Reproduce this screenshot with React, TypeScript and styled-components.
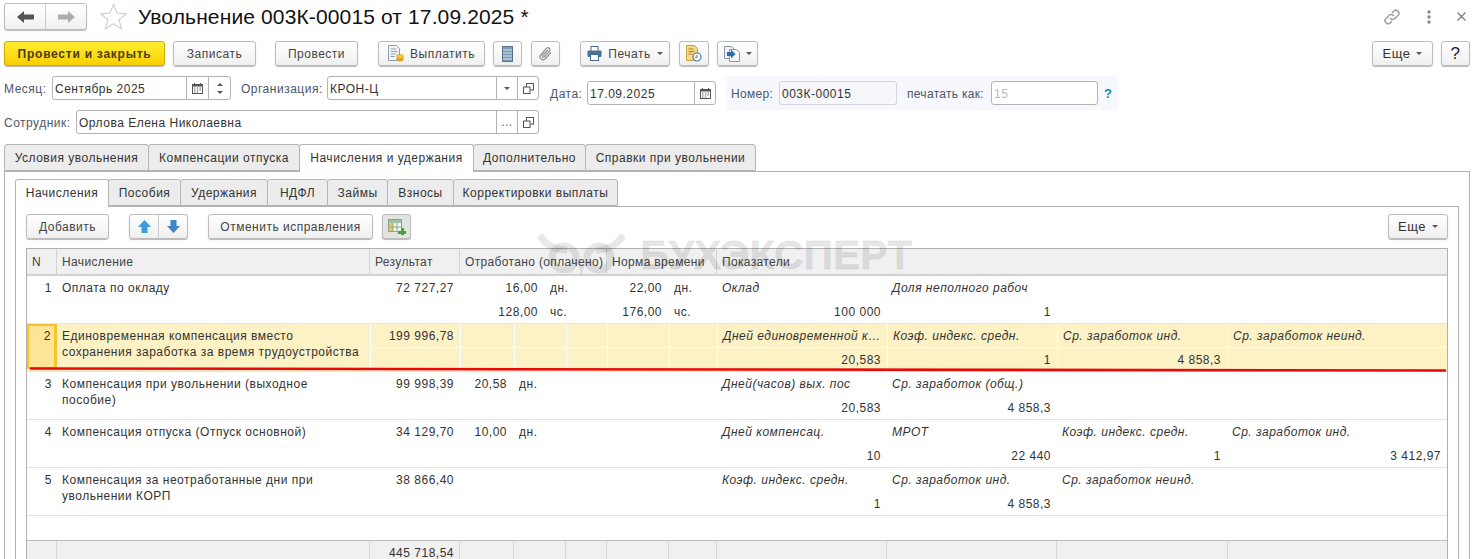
import styled, { createGlobalStyle } from "styled-components";
import { Fragment } from "react";

const GlobalStyle = createGlobalStyle`
  html, body {
    margin: 0;
    padding: 0;
    background: #fff;
    overflow: hidden;
  }
  body {
    font-family: "Liberation Sans", Arial, sans-serif;
    font-size: 12px;
    letter-spacing: 0.5px;
    color: #333;
  }
`;

const Page = styled.div`
  position: relative;
  width: 1473px;
  height: 559px;
  overflow: hidden;
  box-sizing: border-box;
  padding: 3px 3px 0 4px;
`;

const TitleBar = styled.div`
  display: flex;
  align-items: center;
  height: 27px;
`;

const NavGroup = styled.div`
  display: flex;
  width: 83px;
  height: 27px;
  box-sizing: border-box;
  border: 1px solid #bbb;
  border-radius: 3px;
  background: linear-gradient(#fff, #f1f1f1);
  box-shadow: 0 1px 1px rgba(0, 0, 0, 0.25);
`;

const NavButton = styled.div<{ $divided?: boolean }>`
  flex: 1;
  display: flex;
  align-items: center;
  justify-content: center;
  border-left: ${({ $divided }) => ($divided ? "1px solid #ccc" : "none")};
`;

const StarBox = styled.div`
  display: flex;
  margin: 0 11px 0 13px;
`;

const Title = styled.h1`
  margin: 0;
  font-size: 21px;
  font-weight: 400;
  letter-spacing: 0.13px;
  color: #111;
  white-space: nowrap;
`;

const WindowIcons = styled.div`
  margin-left: auto;
  display: flex;
  align-items: center;
  gap: 26px;
  padding-right: 4px;
`;

const CommandBar = styled.div`
  display: flex;
  align-items: center;
  margin-top: 11px;
  height: 25px;
`;

const Button = styled.div<{ $w: number; $ml?: number; $on?: boolean }>`
  display: flex;
  align-items: center;
  justify-content: center;
  gap: 6px;
  flex: none;
  width: ${({ $w }) => $w}px;
  height: 25px;
  margin-left: ${({ $ml }) => $ml ?? 0}px;
  box-sizing: border-box;
  border: 1px solid #bcbcbc;
  border-radius: 3px;
  background: ${({ $on }) =>
    $on ? "#e3e3e3" : "linear-gradient(#fff, #f0f0f0)"};
  box-shadow: 0 1px 1px rgba(0, 0, 0, 0.28);
  color: #444;
  white-space: nowrap;
`;

const PrimaryButton = styled(Button)`
  border-color: #d3a900;
  background: linear-gradient(#ffee33, #f9cf00);
  color: #4b3d10;
  font-weight: 700;
  letter-spacing: 0.75px;
`;

const MoreButton = styled(Button)`
  font-size: 13px;
  color: #333;
`;

const HelpButton = styled(Button)`
  font-size: 17px;
  color: #222;
`;

const Spacer = styled.div`
  flex: 1;
`;

const Caret = styled.span`
  display: inline-block;
  width: 0;
  height: 0;
  border-left: 3px solid transparent;
  border-right: 3px solid transparent;
  border-top: 3px solid #555;
`;

const CaretUp = styled(Caret)`
  border-top: none;
  border-bottom: 3px solid #555;
`;

const FormRow = styled.div<{ $top: number; $h: number }>`
  display: flex;
  align-items: flex-start;
  margin-top: ${({ $top }) => $top}px;
  height: ${({ $h }) => $h}px;
`;

const Label = styled.span<{ $ml?: number; $w: number; $down?: number }>`
  flex: none;
  width: ${({ $w }) => $w}px;
  margin-left: ${({ $ml }) => $ml ?? 0}px;
  margin-top: ${({ $down }) => $down ?? 0}px;
  line-height: 26px;
  color: #4b5668;
  white-space: nowrap;
`;

const Field = styled.div<{ $w: number; $off?: boolean; $down?: number }>`
  display: flex;
  flex: none;
  width: ${({ $w }) => $w}px;
  height: 24px;
  margin-top: ${({ $down }) => $down ?? 0}px;
  box-sizing: border-box;
  border: 1px solid ${({ $off }) => ($off ? "#d3d6db" : "#b3b3b3")};
  border-radius: 3px;
  background: ${({ $off }) => ($off ? "#f5f7fb" : "#fff")};
`;

const FieldText = styled.span<{ $muted?: boolean }>`
  flex: 1;
  padding-left: 2px;
  line-height: 24px;
  color: ${({ $muted }) => ($muted ? "#bbb" : "#333")};
  white-space: nowrap;
  overflow: hidden;
`;

const FieldButton = styled.div<{ $w: number }>`
  display: flex;
  flex-direction: column;
  align-items: center;
  justify-content: center;
  gap: 5px;
  flex: none;
  width: ${({ $w }) => $w}px;
  border-left: 1px solid #b3b3b3;
  color: #666;
`;

const NumberBlock = styled.div`
  display: flex;
  align-items: center;
  width: 392px;
  height: 34px;
  margin-left: 10px;
  background: #f6f8fd;
`;

const PrintLabel = styled.span<{ $w: number; $ml: number }>`
  flex: none;
  width: ${({ $w }) => $w}px;
  margin-left: ${({ $ml }) => $ml}px;
  padding-top: 2px;
  color: #4b5668;
  letter-spacing: 0.3px;
  white-space: nowrap;
`;

const Hint = styled.span`
  margin-left: 6px;
  font-size: 13px;
  font-weight: 700;
  color: #1b7fc0;
`;

const TabRow = styled.div<{ $top: number }>`
  display: flex;
  margin-top: ${({ $top }) => $top}px;
  height: 27px;
  position: relative;
  z-index: 1;
`;

const Tab = styled.div<{ $w: number; $on?: boolean }>`
  display: flex;
  align-items: center;
  justify-content: center;
  flex: none;
  width: ${({ $w }) => $w}px;
  height: ${({ $on }) => ($on ? 28 : 27)}px;
  box-sizing: border-box;
  padding-bottom: ${({ $on }) => ($on ? 1 : 0)}px;
  border: 1px solid #b5b5b5;
  border-bottom: ${({ $on }) => ($on ? "none" : "1px solid #b5b5b5")};
  border-radius: 3px 3px 0 0;
  margin-right: -1px;
  background: ${({ $on }) => ($on ? "#fff" : "#ececec")};
  color: #333;
  white-space: nowrap;
`;

const OuterPanel = styled.div`
  box-sizing: border-box;
  height: 400px;
  width: 1466px;
  border: 1px solid #b0b0b0;
  border-bottom: none;
  padding: 7px 10px 0 10px;
`;

const InnerPanel = styled.div`
  box-sizing: border-box;
  height: 380px;
  border: 1px solid #b0b0b0;
  border-bottom: none;
  padding: 7px 10px 0 10px;
`;

const TableBar = styled.div`
  display: flex;
  align-items: center;
  height: 25px;
`;

const SplitButton = styled.div`
  display: flex;
  flex: none;
  width: 59px;
  height: 25px;
  margin-left: 20px;
  box-sizing: border-box;
  border: 1px solid #bcbcbc;
  border-radius: 3px;
  background: linear-gradient(#fff, #f0f0f0);
  box-shadow: 0 1px 1px rgba(0, 0, 0, 0.28);
`;

const Table = styled.div`
  margin-top: 9px;
  width: 1422px;
  box-sizing: border-box;
  border: 1px solid #b0b0b0;
  border-bottom: none;
`;

const COLUMNS = "30px 313px 90px 147px 110px 170px 170px 170px 1fr";
const MEASURE_COLUMNS = "30px 313px 90px 54px 52px 41px 62px 48px 170px 170px 171px 1fr";

const HeaderRow = styled.div`
  display: grid;
  grid-template-columns: 30px 313px 90px 147px 110px 1fr;
  height: 27px;
  box-sizing: border-box;
  background: #f0f0f0;
  border-bottom: 2px solid #d2d2d2;
`;

const HeaderCell = styled.div`
  padding-left: 5px;
  line-height: 27px;
  border-right: 1px solid #d4d4d4;
  color: #444;
  letter-spacing: 0.35px;
  white-space: nowrap;
  overflow: hidden;
  &:last-child {
    border-right: none;
  }
`;

const Row = styled.div<{ $on?: boolean }>`
  display: grid;
  grid-template-columns: ${COLUMNS};
  height: 48px;
  box-sizing: border-box;
  border-bottom: 1px solid #e4e4e4;
  background: ${({ $on }) => ($on ? "#fdf1c6" : "#fff")};
`;

const NumCell = styled.div<{ $on?: boolean }>`
  box-sizing: border-box;
  height: ${({ $on }) => ($on ? "45px" : "auto")};
  padding-right: ${({ $on }) => ($on ? 3 : 5)}px;
  text-align: right;
  line-height: ${({ $on }) => ($on ? 20 : 24)}px;
  border: ${({ $on }) => ($on ? "2px solid #f6c32a" : "none")};
  border-right-width: ${({ $on }) => ($on ? 3 : 0)}px;
  background: ${({ $on }) => ($on ? "#fde496" : "transparent")};
`;

const NameCell = styled.div`
  padding: 4px 5px 0;
  line-height: 16px;
  color: #333;
  white-space: pre-line;
`;

const Cell = styled.div<{ $on?: boolean }>`
  display: flex;
  flex-direction: column;
  min-width: 0;
  border-left: ${({ $on }) => ($on ? "1px solid #fff" : "none")};
`;

const Line = styled.div<{ $on?: boolean; $right?: boolean; $italic?: boolean }>`
  height: 24px;
  box-sizing: border-box;
  padding: 0 6px 0 5px;
  line-height: 24px;
  text-align: ${({ $right }) => ($right ? "right" : "left")};
  font-style: ${({ $italic }) => ($italic ? "italic" : "normal")};
  white-space: nowrap;
  overflow: hidden;
  &:first-child {
    border-bottom: ${({ $on }) => ($on ? "1px solid #fff" : "none")};
  }
`;

const MeasureCell = styled.div`
  display: flex;
  flex-direction: column;
`;

const MeasureLine = styled.div<{ $valueWidth: number }>`
  display: grid;
  grid-template-columns: ${({ $valueWidth }) => $valueWidth}px 1fr;
  height: 24px;
  line-height: 24px;
`;

const MeasureValue = styled.span`
  text-align: right;
  padding-right: 5px;
`;

const MeasureUnit = styled.span`
  padding-left: 7px;
`;

const EmptySplit = styled.div<{ $cols: string }>`
  display: grid;
  grid-template-columns: ${({ $cols }) => $cols};
`;

const BlankRow = styled.div`
  height: 25px;
  box-sizing: border-box;
  border-bottom: 1px solid #bdbdbd;
`;

const FooterRow = styled.div`
  display: grid;
  grid-template-columns: ${MEASURE_COLUMNS};
  height: 24px;
  background: #f0f0f0;
`;

const FooterCell = styled.div`
  padding-right: 5px;
  text-align: right;
  line-height: 24px;
  border-right: 1px solid #d8d8d8;
  &:last-child {
    border-right: none;
  }
`;

const Watermark = styled.div`
  position: absolute;
  left: 538px;
  top: 232px;
  display: flex;
  align-items: center;
  gap: 15px;
  height: 46px;
  color: rgba(0, 0, 0, 0.09);
  pointer-events: none;
`;

const WatermarkText = styled.span`
  font-size: 41px;
  font-weight: 700;
  letter-spacing: 0;
  line-height: 46px;
  -webkit-text-stroke: 0.8px rgba(0, 0, 0, 0.09);
`;

const RedLine = styled.svg`
  position: absolute;
  left: 28px;
  top: 366px;
  pointer-events: none;
`;

const ArrowNav = ({ dir, color }: { dir: "left" | "right"; color: string }) => (
  <svg width="17" height="12" viewBox="0 0 17 12">
    <path
      d={dir === "left" ? "M0 6 7 0v3.5h10v5H7V12z" : "M17 6 10 0v3.5H0v5h10V12z"}
      fill={color}
    />
  </svg>
);

const StarIcon = () => (
  <svg width="27" height="27" viewBox="0 0 27 27">
    <path
      d="M13.5 1.5 17 10.2l9.3.6-7.2 5.9 2.4 9-8-5-8 5 2.4-9-7.2-5.9 9.3-.6z"
      fill="#fff"
      stroke="#d2d2d2"
      strokeWidth="1.2"
    />
  </svg>
);

const LinkIcon = () => (
  <svg width="18" height="18" viewBox="0 0 18 18" fill="none" stroke="#a0a0a0" strokeWidth="1.6" strokeLinecap="round">
    <path d="M7.5 10.5a3 3 0 0 0 4.4 0l3-3a3 3 0 0 0-4.3-4.3L9.5 4.4" />
    <path d="M10.5 7.5a3 3 0 0 0-4.4 0l-3 3a3 3 0 0 0 4.3 4.3l1.1-1.2" />
  </svg>
);

const DotsIcon = () => (
  <svg width="4" height="14" viewBox="0 0 4 14" fill="#8a8a8a">
    <circle cx="2" cy="2" r="1.7" />
    <circle cx="2" cy="7" r="1.7" />
    <circle cx="2" cy="12" r="1.7" />
  </svg>
);

const CloseIcon = () => (
  <svg width="9" height="9" viewBox="0 0 9 9" stroke="#777" strokeWidth="1.1">
    <path d="M.5.5l8 8M8.5.5l-8 8" />
  </svg>
);

const PayIcon = () => (
  <svg width="16" height="17" viewBox="0 0 16 17">
    <path d="M.5.5h8l3 3v12H.5z" fill="#f4f6f9" stroke="#8f9bb0" />
    <path d="M2.5 4h6M2.5 6.5h7M2.5 9h6M2.5 11.5h4" stroke="#8aa0bc" />
    <ellipse cx="12" cy="14.2" rx="3.6" ry="2.2" fill="#d9a520" />
    <ellipse cx="12" cy="11.6" rx="3.6" ry="2.2" fill="#f2c83a" stroke="#c69516" strokeWidth=".6" />
  </svg>
);

const ListIcon = () => (
  <svg width="11" height="16" viewBox="0 0 11 16">
    <rect x=".5" y=".5" width="10" height="15" fill="#7d9cb8" stroke="#55718c" />
    <path d="M1 4h9M1 7h9M1 10h9M1 13h9" stroke="#d6e2ec" />
  </svg>
);

const ClipIcon = () => (
  <svg width="15" height="16" viewBox="0 0 15 16" fill="none" stroke="#8c8c8c" strokeWidth="1.2">
    <path d="M13 6.5 7 13a3 3 0 0 1-4.4-4l6-6.8a2 2 0 0 1 3 2.6L6 11a1 1 0 0 1-1.5-1.3L9.7 4" />
  </svg>
);

const PrinterIcon = () => (
  <svg width="15" height="15" viewBox="0 0 15 15">
    <rect x="4" y=".5" width="7" height="5" fill="#fff" stroke="#46688a" />
    <rect x=".5" y="4.5" width="14" height="6.5" rx="1" fill="#4d7296" />
    <rect x="3.5" y="8.5" width="8" height="6" fill="#fff" stroke="#46688a" />
  </svg>
);

const ReportIcon = () => (
  <svg width="16" height="17" viewBox="0 0 16 17">
    <path d="M.5.5h8l3 3v12H.5z" fill="#f5d985" stroke="#c4a13c" />
    <path d="M2.5 4h5M2.5 6.500h6M2.500 9h4" stroke="#a88526" />
    <circle cx="11" cy="12" r="4" fill="#fff" stroke="#3c78b4" strokeWidth="1.2" />
    <path d="M11 10v2.3h-2" stroke="#d5402b" fill="none" />
  </svg>
);

const MoveIcon = () => (
  <svg width="16" height="16" viewBox="0 0 16 16">
    <path d="M.5.5h7l3 3v9H.5z" fill="#eef1f5" stroke="#8c98a8" />
    <path d="M5.5 3.500h7l3 3v9h-10z" fill="#f6f8fb" stroke="#8c98a8" />
    <path d="M3 6h4V3.500L11.500 8 7 12.500V10H3z" fill="#2d6fa8" />
  </svg>
);

const CalendarIcon = () => (
  <svg width="11" height="11" viewBox="0 0 11 11">
    <rect x=".5" y="1.5" width="10" height="9" fill="#fff" stroke="#555" />
    <rect x="1" y="1" width="9" height="2.5" fill="#555" />
    <path d="M2.5 0v2M8.5 0v2" stroke="#555" />
    <path d="M2 5h1.500M4.800 5h1.500M7.500 5H9M2 7h1.500M4.800 7h1.500M7.500 7H9M2 9h1.500M4.800 9h1.500" stroke="#666" />
  </svg>
);

const OpenIcon = () => (
  <svg width="11" height="11" viewBox="0 0 11 11" fill="#fff" stroke="#555">
    <rect x="3.5" y=".5" width="7" height="6.5" />
    <rect x=".5" y="4" width="6.5" height="6.5" />
  </svg>
);

const ArrowUp = () => (
  <svg width="13" height="13" viewBox="0 0 13 13">
    <path d="M6.5 0 13 7H9.500v6h-6V7H0z" fill="#3d9ddc" />
  </svg>
);

const ArrowDown = () => (
  <svg width="13" height="13" viewBox="0 0 13 13">
    <path d="M6.5 13 13 6H9.500V0h-6v6H0z" fill="#3f86c8" />
  </svg>
);

const GridAddIcon = () => (
  <svg width="18" height="16" viewBox="0 0 18 16">
    <rect x=".5" y=".5" width="13" height="12" fill="#f4f6f2" stroke="#8aa58c" />
    <rect x="1" y="1" width="12" height="3" fill="#a3bfa3" />
    <rect x="1" y="4" width="4" height="8" fill="#ecc95c" />
    <path d="M5 4v8M9 4v8M1 8h12" stroke="#8aa58c" />
    <path d="M10 12h3V9h3v3h2v3h-2v1h-3v-1h-3z" fill="#3fa535" />
  </svg>
);

const WatermarkLogo = () => (
  <svg width="87" height="46" viewBox="0 0 87 46" fill="none" stroke="currentColor">
    <path d="M2 3c6 11 16 15 27 15M85 3c-6 11-16 15-27 15" strokeWidth="7" />
    <circle cx="26" cy="26" r="12" strokeWidth="7" />
    <circle cx="61" cy="26" r="12" strokeWidth="7" />
    <path d="M40 32h7l-3.500 12z" fill="currentColor" stroke="none" />
  </svg>
);

interface Indicator {
  title?: string;
  value?: string;
}

interface Measure {
  width: number;
  lines: [string, string][];
}

interface Accrual {
  n: number;
  name: string;
  result: string;
  worked?: Measure;
  norm?: Measure;
  indicators: Indicator[];
  selected?: boolean;
}

const accruals: Accrual[] = [
  {
    n: 1,
    name: "Оплата по окладу",
    result: "72 727,27",
    worked: { width: 83, lines: [["16,00", "дн."], ["128,00", "чс."]] },
    norm: { width: 60, lines: [["22,00", "дн."], ["176,00", "чс."]] },
    indicators: [
      { title: "Оклад", value: "100 000" },
      { title: "Доля неполного рабоч", value: "1" },
    ],
  },
  {
    n: 2,
    name: "Единовременная компенсация вместо\nсохранения заработка за время трудоустройства",
    result: "199 996,78",
    selected: true,
    indicators: [
      { title: "Дней единовременной к…", value: "20,583" },
      { title: "Коэф. индекс. средн.", value: "1" },
      { title: "Ср. заработок инд.", value: "4 858,3" },
      { title: "Ср. заработок неинд." },
    ],
  },
  {
    n: 3,
    name: "Компенсация при увольнении (выходное\nпособие)",
    result: "99 998,39",
    worked: { width: 52, lines: [["20,58", "дн."]] },
    indicators: [
      { title: "Дней(часов) вых. пос", value: "20,583" },
      { title: "Ср. заработок (общ.)", value: "4 858,3" },
    ],
  },
  {
    n: 4,
    name: "Компенсация отпуска (Отпуск основной)",
    result: "34 129,70",
    worked: { width: 52, lines: [["10,00", "дн."]] },
    indicators: [
      { title: "Дней компенсац.", value: "10" },
      { title: "МРОТ", value: "22 440" },
      { title: "Коэф. индекс. средн.", value: "1" },
      { title: "Ср. заработок инд.", value: "3 412,97" },
    ],
  },
  {
    n: 5,
    name: "Компенсация за неотработанные дни при\nувольнении КОРП",
    result: "38 866,40",
    indicators: [
      { title: "Коэф. индекс. средн.", value: "1" },
      { title: "Ср. заработок инд.", value: "4 858,3" },
      { title: "Ср. заработок неинд." },
    ],
  },
];

const MeasureBlock = ({ measure }: { measure?: Measure }) => (
  <MeasureCell>
    {measure?.lines.map(([value, unit]) => (
      <MeasureLine key={value} $valueWidth={measure.width}>
        <MeasureValue>{value}</MeasureValue>
        <MeasureUnit>{unit}</MeasureUnit>
      </MeasureLine>
    ))}
  </MeasureCell>
);

const EmptyCells = ({ cols, count }: { cols: string; count: number }) => (
  <EmptySplit $cols={cols}>
    {Array.from({ length: count }, (_, i) => (
      <Cell key={i} $on>
        <Line $on />
        <Line $on />
      </Cell>
    ))}
  </EmptySplit>
);

const AccrualRow = ({ row }: { row: Accrual }) => {
  const on = row.selected;
  const indicators = [0, 1, 2, 3].map((i) => row.indicators[i] ?? {});
  return (
    <Row $on={on}>
      <NumCell $on={on}>{row.n}</NumCell>
      <NameCell>{row.name}</NameCell>
      <Cell $on={on}>
        <Line $on={on} $right>
          {row.result}
        </Line>
        <Line $on={on} />
      </Cell>
      {on ? (
        <Fragment>
          <EmptyCells cols="54px 52px 41px" count={3} />
          <EmptyCells cols="62px 48px" count={2} />
        </Fragment>
      ) : (
        <Fragment>
          <MeasureBlock measure={row.worked} />
          <MeasureBlock measure={row.norm} />
        </Fragment>
      )}
      {indicators.map((ind, i) => (
        <Cell key={i} $on={on}>
          <Line $on={on} $italic>
            {ind.title}
          </Line>
          <Line $on={on} $right>
            {ind.value}
          </Line>
        </Cell>
      ))}
    </Row>
  );
};

export default function App() {
  return (
    <Page>
      <GlobalStyle />
      <TitleBar>
        <NavGroup>
          <NavButton>
            <ArrowNav dir="left" color="#555" />
          </NavButton>
          <NavButton $divided>
            <ArrowNav dir="right" color="#adadad" />
          </NavButton>
        </NavGroup>
        <StarBox>
          <StarIcon />
        </StarBox>
        <Title>Увольнение 003К-00015 от 17.09.2025 *</Title>
        <WindowIcons>
          <LinkIcon />
          <DotsIcon />
          <CloseIcon />
        </WindowIcons>
      </TitleBar>

      <CommandBar>
        <PrimaryButton $w={161}>Провести и закрыть</PrimaryButton>
        <Button $w={83} $ml={8}>Записать</Button>
        <Button $w={83} $ml={19}>Провести</Button>
        <Button $w={107} $ml={20}>
          <PayIcon />
          Выплатить
        </Button>
        <Button $w={29} $ml={8}>
          <ListIcon />
        </Button>
        <Button $w={29} $ml={9}>
          <ClipIcon />
        </Button>
        <Button $w={90} $ml={20}>
          <PrinterIcon />
          Печать
          <Caret />
        </Button>
        <Button $w={30} $ml={9}>
          <ReportIcon />
        </Button>
        <Button $w={41} $ml={8}>
          <MoveIcon />
          <Caret />
        </Button>
        <Spacer />
        <MoreButton $w={61}>
          Еще
          <Caret />
        </MoreButton>
        <HelpButton $w={29} $ml={8}>
          ?
        </HelpButton>
      </CommandBar>

      <FormRow $top={10} $h={34}>
        <Label $w={48}>Месяц:</Label>
        <Field $w={179}>
          <FieldText>Сентябрь 2025</FieldText>
          <FieldButton $w={21}>
            <CalendarIcon />
          </FieldButton>
          <FieldButton $w={21}>
            <CaretUp />
            <Caret />
          </FieldButton>
        </Field>
        <Label $w={86} $ml={10}>Организация:</Label>
        <Field $w={212}>
          <FieldText>КРОН-Ц</FieldText>
          <FieldButton $w={20}>
            <Caret />
          </FieldButton>
          <FieldButton $w={20}>
            <OpenIcon />
          </FieldButton>
        </Field>
        <Label $w={37} $ml={11} $down={5}>Дата:</Label>
        <Field $w={129} $down={5}>
          <FieldText>17.09.2025</FieldText>
          <FieldButton $w={20}>
            <CalendarIcon />
          </FieldButton>
        </Field>
        <NumberBlock>
          <PrintLabel $w={48} $ml={5}>Номер:</PrintLabel>
          <Field $w={118} $off>
            <FieldText>003К-00015</FieldText>
          </Field>
          <PrintLabel $w={84} $ml={10}>печатать как:</PrintLabel>
          <Field $w={107}>
            <FieldText $muted>15</FieldText>
          </Field>
          <Hint>?</Hint>
        </NumberBlock>
      </FormRow>

      <FormRow $top={0} $h={24}>
        <Label $w={72}>Сотрудник:</Label>
        <Field $w={463}>
          <FieldText>Орлова Елена Николаевна</FieldText>
          <FieldButton $w={20}>…</FieldButton>
          <FieldButton $w={20}>
            <OpenIcon />
          </FieldButton>
        </Field>
      </FormRow>

      <TabRow $top={10}>
        <Tab $w={145}>Условия увольнения</Tab>
        <Tab $w={152}>Компенсации отпуска</Tab>
        <Tab $w={175} $on>Начисления и удержания</Tab>
        <Tab $w={113}>Дополнительно</Tab>
        <Tab $w={171}>Справки при увольнении</Tab>
      </TabRow>
      <OuterPanel>
        <TabRow $top={0}>
          <Tab $w={94} $on>Начисления</Tab>
          <Tab $w={73}>Пособия</Tab>
          <Tab $w={88}>Удержания</Tab>
          <Tab $w={61}>НДФЛ</Tab>
          <Tab $w={61}>Займы</Tab>
          <Tab $w={67}>Взносы</Tab>
          <Tab $w={165}>Корректировки выплаты</Tab>
        </TabRow>
        <InnerPanel>
          <TableBar>
            <Button $w={83}>Добавить</Button>
            <SplitButton>
              <NavButton>
                <ArrowUp />
              </NavButton>
              <NavButton $divided>
                <ArrowDown />
              </NavButton>
            </SplitButton>
            <Button $w={165} $ml={20}>Отменить исправления</Button>
            <Button $w={29} $ml={9} $on>
              <GridAddIcon />
            </Button>
            <Spacer />
            <MoreButton $w={60}>
              Еще
              <Caret />
            </MoreButton>
          </TableBar>
          <Table>
            <HeaderRow>
              <HeaderCell>N</HeaderCell>
              <HeaderCell>Начисление</HeaderCell>
              <HeaderCell>Результат</HeaderCell>
              <HeaderCell>Отработано (оплачено)</HeaderCell>
              <HeaderCell>Норма времени</HeaderCell>
              <HeaderCell>Показатели</HeaderCell>
            </HeaderRow>
            {accruals.map((row) => (
              <AccrualRow key={row.n} row={row} />
            ))}
            <BlankRow />
            <FooterRow>
              <FooterCell />
              <FooterCell />
              <FooterCell>445 718,54</FooterCell>
              {Array.from({ length: 9 }, (_, i) => (
                <FooterCell key={i} />
              ))}
            </FooterRow>
          </Table>
        </InnerPanel>
      </OuterPanel>

      <Watermark>
        <WatermarkLogo />
        <WatermarkText>БУХЭКСПЕРТ</WatermarkText>
      </Watermark>
      <RedLine width="1420" height="8" viewBox="0 0 1420 8">
        <path d="M2 2.500C400 2 800 3.500 1418 4.500" stroke="#e80a0a" strokeWidth="2.600" fill="none" />
      </RedLine>
    </Page>
  );
}
